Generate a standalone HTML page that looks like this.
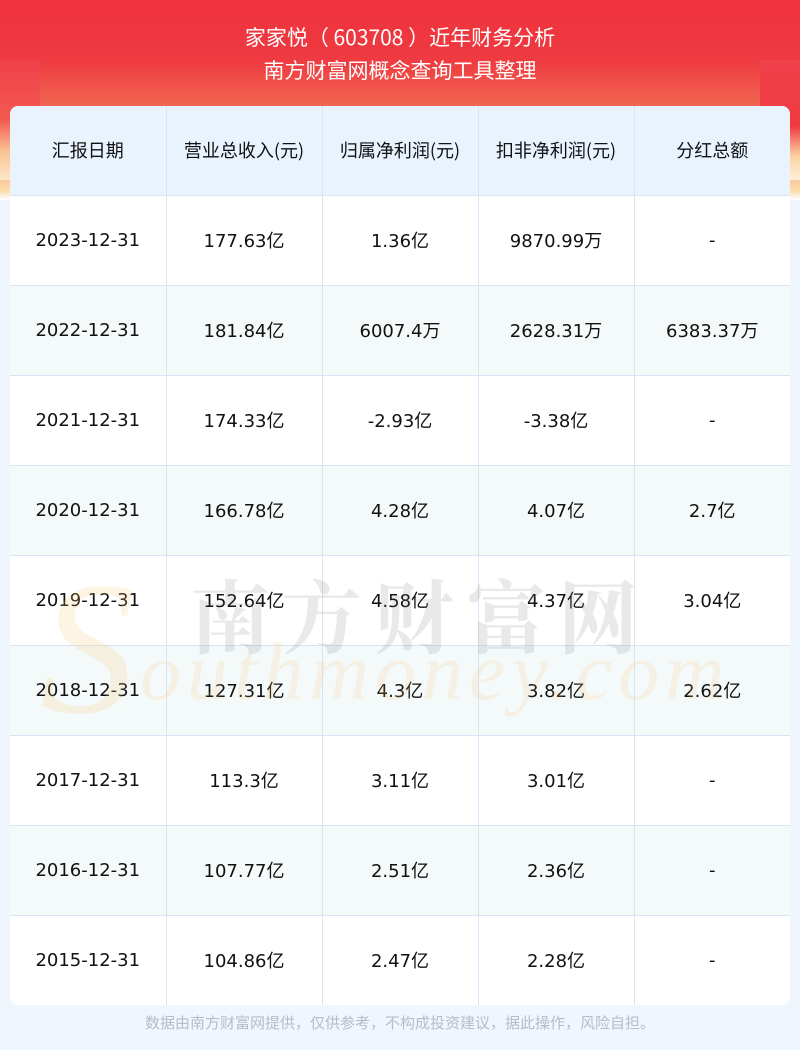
<!DOCTYPE html>
<html><head><meta charset="utf-8"><style>
*{margin:0;padding:0;box-sizing:border-box}
body{width:800px;height:1050px;background:#eff6fd;position:relative;overflow:hidden;font-family:"DejaVu Sans","Noto Sans CJK SC",sans-serif}
.hero{position:absolute;left:0;top:0;width:800px;height:200px;background:linear-gradient(180deg,#f0323e 0%,#ee3a40 30%,#f0604f 50%,#f5a07a 75%,#fbd9a8 95%,#fff 100%)}
.side{position:absolute;top:60px;width:40px;height:120px}
.t1,.t2{position:absolute;left:0;width:800px;text-align:center;color:#fff;font-family:"Noto Sans CJK SC",sans-serif;font-size:21px}
.t1{top:22px}.t2{top:55px}
table{position:absolute;left:10px;top:106px;width:780px;border-collapse:collapse;background:#fff;border-radius:8px;overflow:hidden}
td{height:90px;text-align:center;border:1px solid #d8e4f5;font-size:18px;color:#111;width:156px}
tr:first-child td{background:#e8f3fe;height:89px;font-family:"Noto Sans CJK SC",sans-serif;font-size:18px;border-top:none}
tr:nth-child(odd):not(:first-child) td{background:rgba(243,248,250,0.9)}
tr td:first-child{border-left:none}tr td:last-child{border-right:none}
tr:last-child td{border-bottom:none}
.wm{position:absolute;z-index:1;pointer-events:none}
.foot{position:absolute;top:1012px;width:800px;text-align:center;color:#b8bcc4;font-size:15px;font-family:"Noto Sans CJK SC",sans-serif}
</style></head><body>
<div class="hero"></div>
<div class="side" style="left:0;background:linear-gradient(180deg,#f0404a,#f25a50 50%,#f9c090 75%,#fde8c8)"></div>
<div class="side" style="right:0;background:linear-gradient(180deg,#f0404a,#f03a40 55%,#fbd2a0 80%,#fff0d8)"></div>
<div class="t1">家家悦（ 603708 ）近年财务分析</div>
<div class="t2">南方财富网概念查询工具整理</div>
<table>
<tr><td>汇报日期</td><td>营业总收入(元)</td><td>归属净利润(元)</td><td>扣非净利润(元)</td><td>分红总额</td></tr>
<tr><td>2023-12-31</td><td>177.63亿</td><td>1.36亿</td><td>9870.99万</td><td>-</td></tr>
<tr><td>2022-12-31</td><td>181.84亿</td><td>6007.4万</td><td>2628.31万</td><td>6383.37万</td></tr>
<tr><td>2021-12-31</td><td>174.33亿</td><td>-2.93亿</td><td>-3.38亿</td><td>-</td></tr>
<tr><td>2020-12-31</td><td>166.78亿</td><td>4.28亿</td><td>4.07亿</td><td>2.7亿</td></tr>
<tr><td>2019-12-31</td><td>152.64亿</td><td>4.58亿</td><td>4.37亿</td><td>3.04亿</td></tr>
<tr><td>2018-12-31</td><td>127.31亿</td><td>4.3亿</td><td>3.82亿</td><td>2.62亿</td></tr>
<tr><td>2017-12-31</td><td>113.3亿</td><td>3.11亿</td><td>3.01亿</td><td>-</td></tr>
<tr><td>2016-12-31</td><td>107.77亿</td><td>2.51亿</td><td>2.36亿</td><td>-</td></tr>
<tr><td>2015-12-31</td><td>104.86亿</td><td>2.47亿</td><td>2.28亿</td><td>-</td></tr>
</table>
<div class="wm" style="left:190px;top:555px;font-family:'Noto Serif CJK SC',serif;font-size:80px;font-weight:bold;color:rgba(120,120,120,0.16);letter-spacing:12px">南方财富网</div>
<div class="wm" style="left:40px;top:540px;font-family:'Liberation Serif',serif;font-style:italic;font-size:190px;color:rgba(250,200,120,0.2)">S</div>
<div class="wm" style="left:140px;top:625px;font-family:'Liberation Serif',serif;font-style:italic;font-size:82px;color:rgba(250,200,120,0.18);letter-spacing:6px">outhmoney.com</div>
<div class="foot">数据由南方财富网提供，仅供参考，不构成投资建议，据此操作，风险自担。</div>
</body></html>
